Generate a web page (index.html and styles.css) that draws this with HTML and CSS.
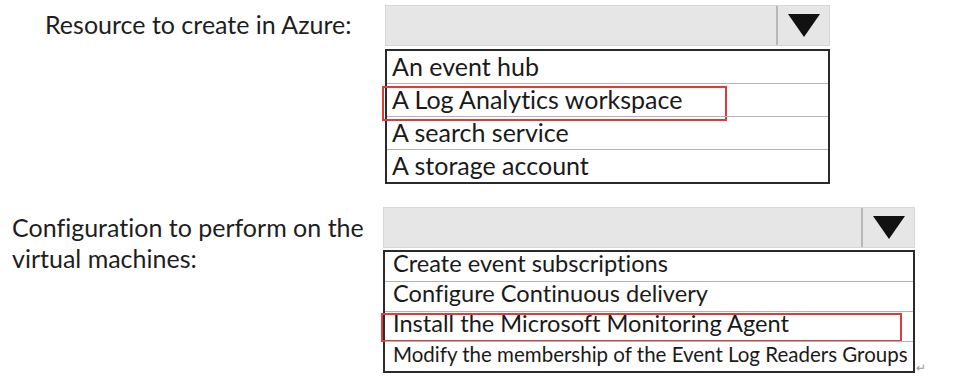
FILE: index.html
```html
<!DOCTYPE html>
<html>
<head>
<meta charset="utf-8">
<link rel="stylesheet" href="styles.css">
</head>
<body>
<div class="page">
  <section class="q q1">
    <div class="label">Resource to create in Azure:</div>
    <div class="dd">
      <div class="select"><div class="fill"></div><div class="btn"><span class="tri"></span></div></div>
      <ul class="opts">
        <li>An event hub</li>
        <li class="answer">A Log Analytics workspace</li>
        <li>A search service</li>
        <li>A storage account</li>
      </ul>
    </div>
  </section>
  <section class="q q2">
    <div class="label">Configuration to perform on the<br>virtual machines:</div>
    <div class="dd">
      <div class="select"><div class="fill"></div><div class="btn"><span class="tri"></span></div></div>
      <ul class="opts">
        <li>Create event subscriptions</li>
        <li>Configure Continuous delivery</li>
        <li class="answer">Install the Microsoft Monitoring Agent</li>
        <li class="small">Modify the membership of the Event Log Readers Groups<span class="ret">↵</span></li>
      </ul>
    </div>
  </section>
</div>
</body>
</html>
```
FILE: styles.css
```css
html, body {
  margin: 0;
  padding: 0;
  background: #ffffff;
}
body {
  font-family: Lato, "Open Sans", "Liberation Sans", sans-serif;
  font-variant-ligatures: none;
  font-feature-settings: "liga" 0, "clig" 0;
  color: #222222;
}
.page {
  width: 975px;
  height: 380px;
  overflow: hidden;
}
.q {
  display: flex;
  align-items: flex-start;
}
.q1 {
  padding: 5px 0 0 45px;
}
.q2 {
  padding: 23px 0 0 12px;
}
.label {
  font-size: 25px;
  line-height: 31px;
  color: #1e1e1e;
}
.q1 .label {
  width: 340px;
  padding-top: 4px;
}
.q2 .label {
  width: 371px;
  padding-top: 5px;
}
.dd {
  display: flex;
  flex-direction: column;
}
.q1 .dd { width: 445px; }
.q2 .dd { width: 532px; }
.select {
  display: flex;
  height: 41px;
  background: #e6e6e6;
  border: 1px solid #d6d6d6;
  box-sizing: border-box;
}
.fill {
  flex: 1;
}
.btn {
  width: 51px;
  border-left: 2px solid #b8b8b8;
  display: flex;
  justify-content: center;
  align-items: center;
}
.tri {
  width: 0;
  height: 0;
  border-left: 16px solid transparent;
  border-right: 16px solid transparent;
  border-top: 23px solid #111111;
}
.opts {
  list-style: none;
  margin: 3px 0 0 0;
  padding: 0;
  border: 2px solid #2a2a2a;
  box-sizing: border-box;
}
.q2 .opts {
  margin-top: 2px;
}
.opts li {
  position: relative;
  border-top: 1px solid #b4b4b4;
  white-space: nowrap;
  color: #1a1a1a;
}
.opts li:first-child {
  border-top: none;
}
.q1 .opts li {
  height: 32px;
  line-height: 30px;
  font-size: 25px;
  padding-left: 5px;
}
.q2 .opts li {
  height: 29px;
  line-height: 23px;
  font-size: 23.6px;
  padding-left: 8px;
}
.q2 .opts li.small {
  font-size: 20.5px;
  line-height: 25px;
}
.answer::after {
  content: "";
  position: absolute;
  border: 2px solid #e03a3a;
  box-sizing: border-box;
}
.q1 .answer::after {
  left: -5px;
  top: 2px;
  width: 345px;
  height: 35px;
}
.q2 .answer::after {
  left: -4px;
  top: 1px;
  width: 521px;
  height: 29px;
}
.ret {
  position: absolute;
  right: -13px;
  bottom: -3px;
  font-size: 12px;
  line-height: 12px;
  color: #999999;
}
```
